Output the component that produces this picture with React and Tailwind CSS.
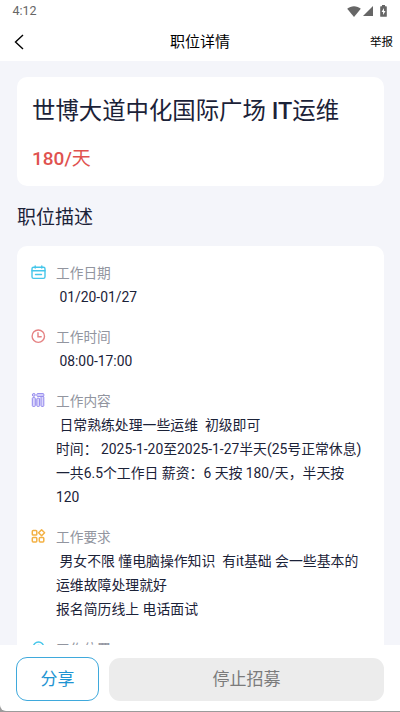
import React from 'react';

const CalendarIcon = () => (
  <svg viewBox="0 0 16 16" className="w-4 h-4" fill="none" stroke="#45c6ea" strokeWidth="1.4" strokeLinecap="round">
    <rect x="2" y="3.2" width="13" height="11.2" rx="1.6" />
    <path d="M2 6.8h13M5.500 10.500h6M5.200 2v2M11.800 2v2" />
  </svg>
);

const ClockIcon = () => (
  <svg viewBox="0 0 16 16" className="w-4 h-4" fill="none" stroke="#e58283" strokeWidth="1.4" strokeLinecap="round">
    <circle cx="8.300" cy="8.200" r="6.200" />
    <path d="M8 4.800v4h3.200" />
  </svg>
);

const ContentIcon = () => (
  <svg viewBox="0 0 16 16" className="w-4 h-4" fill="#dcd8fb" stroke="#9288ee" strokeWidth="1">
    <circle cx="3.8" cy="2.900" r="1.400" />
    <rect x="2.300" y="5.600" width="3" height="8.800" rx="0.800" />
    <rect x="6.800" y="1.600" width="7" height="2.800" rx="0.800" />
    <rect x="6.800" y="6.200" width="2.800" height="8.200" rx="0.800" />
    <rect x="11" y="4.400" width="2.800" height="10" rx="0.800" />
  </svg>
);

const GridIcon = () => (
  <svg viewBox="0 0 16 16" className="w-4 h-4" fill="none" stroke="#f3b144" strokeWidth="1.5">
    <rect x="2.300" y="2.600" width="4.500" height="4.500" rx="0.900" />
    <path d="M11.600 1.800l3 3-3 3-3-3z" strokeLinejoin="round" />
    <rect x="2.300" y="9.500" width="4.500" height="4.500" rx="0.900" />
    <rect x="9.300" y="9.500" width="4.500" height="4.500" rx="0.900" />
  </svg>
);

const PinIcon = () => (
  <svg viewBox="0 0 16 16" className="w-4 h-4" fill="none" stroke="#45c6ea" strokeWidth="1.4">
    <path d="M8.500 15.500C5.500 12.500 3.300 10 3.300 7.200a5.200 5.200 0 0 1 10.400 0C13.700 10 11.500 12.500 8.500 15.500z" />
    <circle cx="8.500" cy="7.200" r="1.800" />
  </svg>
);

const items = [
  { label: '工作日期', icon: CalendarIcon, lines: [' 01/20-01/27'] },
  { label: '工作时间', icon: ClockIcon, lines: [' 08:00-17:00'] },
  {
    label: '工作内容',
    icon: ContentIcon,
    lines: [
      ' 日常熟练处理一些运维  初级即可',
      '时间： 2025-1-20至2025-1-27半天(25号正常休息)',
      '一共6.5个工作日 薪资：6 天按 180/天，半天按',
      '120',
    ],
  },
  {
    label: '工作要求',
    icon: GridIcon,
    lines: [
      ' 男女不限 懂电脑操作知识  有it基础 会一些基本的',
      '运维故障处理就好',
      '报名简历线上 电话面试',
    ],
  },
  { label: '工作位置', icon: PinIcon, lines: [] },
];

const StatusBar = () => (
  <div className="flex items-center justify-between h-[22px] pl-[12.500px] pr-[13px] text-[#666666]">
    <span className="text-[12.500px] leading-[22px]">4:12</span>
    <div className="flex items-center">
      <svg viewBox="0 0 14 11" className="w-[14px] h-[11px]" fill="currentColor">
        <path d="M0.200 2.800C4 -0.600 10 -0.600 13.800 2.800L7 11z" />
      </svg>
      <svg viewBox="0 0 10 10" className="w-[10px] h-[10px] ml-[2px]" fill="currentColor">
        <path d="M10 0v10H0z" />
      </svg>
      <svg viewBox="0 0 7 12" className="w-[7px] h-[12px] ml-[7px]" fill="currentColor">
        <path d="M2 0h3v1.200h1.200q.6 0 .6.6v9.400q0 .6-.6.6H.8q-.6 0-.6-.6V1.800q0-.6.6-.6H2z" />
        <path d="M4 3L1.600 7h1.500v3L5.500 6H4z" fill="#fff" />
      </svg>
    </div>
  </div>
);

export default function App() {
  return (
    <div className="w-[400px] h-[712px] overflow-hidden bg-[#9b9b9b] pb-px">
      <div className="flex flex-col h-full overflow-hidden rounded-bl-[6px] bg-white text-[#1b2238] font-[Roboto,'Noto_Sans_CJK_SC',sans-serif]">
        <StatusBar />

        {/* Nav bar */}
        <div className="grid grid-cols-3 items-center h-[39px] shrink-0 pl-[14px] pr-[7px] text-black">
          <svg viewBox="0 0 10 16" className="w-[10px] h-[16px]" fill="none" stroke="currentColor" strokeWidth="1.4">
            <path d="M9 1L1.500 8L9 15" />
          </svg>
          <h1 className="text-[15px] leading-[22px] text-center -ml-[7px]">职位详情</h1>
          <span className="text-[11.500px] leading-[20px] text-right">举报</span>
        </div>

        {/* Scroll area */}
        <div className="flex-1 min-h-0 overflow-hidden bg-[#f4f5fa] pr-4 pt-4 pl-[17px]">
          <div className="h-[109px] rounded-[10px] bg-white px-[15px] pt-[17px]">
            <h2 className="text-[23.400px] leading-[34px] whitespace-nowrap">
              世博大道中化国际广场 <span className="font-medium">IT</span>运维
            </h2>
            <p className="mt-[17px] text-[19px] leading-[28px] text-[#e0524f]">
              <span className="font-medium">180/</span>天
            </p>
          </div>

          <h3 className="mt-[17px] mb-[13px] text-[19px] leading-[30px]">职位描述</h3>

          <div className="rounded-[10px] bg-white pl-[13px] pt-[15px] pb-4">
            {items.map(({ label, icon: Icon, lines }) => (
              <div key={label} className="mb-4">
                <div className="flex items-center h-6 gap-[10px]">
                  <div className="-mt-[2px]">
                    <Icon />
                  </div>
                  <span className="text-[13.700px] leading-6 text-[#92959f]">{label}</span>
                </div>
                {lines.map((line) => (
                  <p key={line} className="ml-[26px] text-[13.860px] leading-6 whitespace-pre">{line}</p>
                ))}
              </div>
            ))}
          </div>
        </div>

        {/* Bottom actions */}
        <div className="flex h-[66px] shrink-0 gap-[10px] pl-4 pr-4 pt-[12px]">
          <button className="w-[83px] h-[44px] pt-px rounded-[11px] border border-[#3fa9dc] text-[17px] text-[#1e94d2]">分享</button>
          <button className="flex-1 h-[43px] mt-px rounded-[11px] bg-[#ececec] text-[17px] text-[#7b7b7b]">停止招募</button>
        </div>
      </div>
    </div>
  );
}
